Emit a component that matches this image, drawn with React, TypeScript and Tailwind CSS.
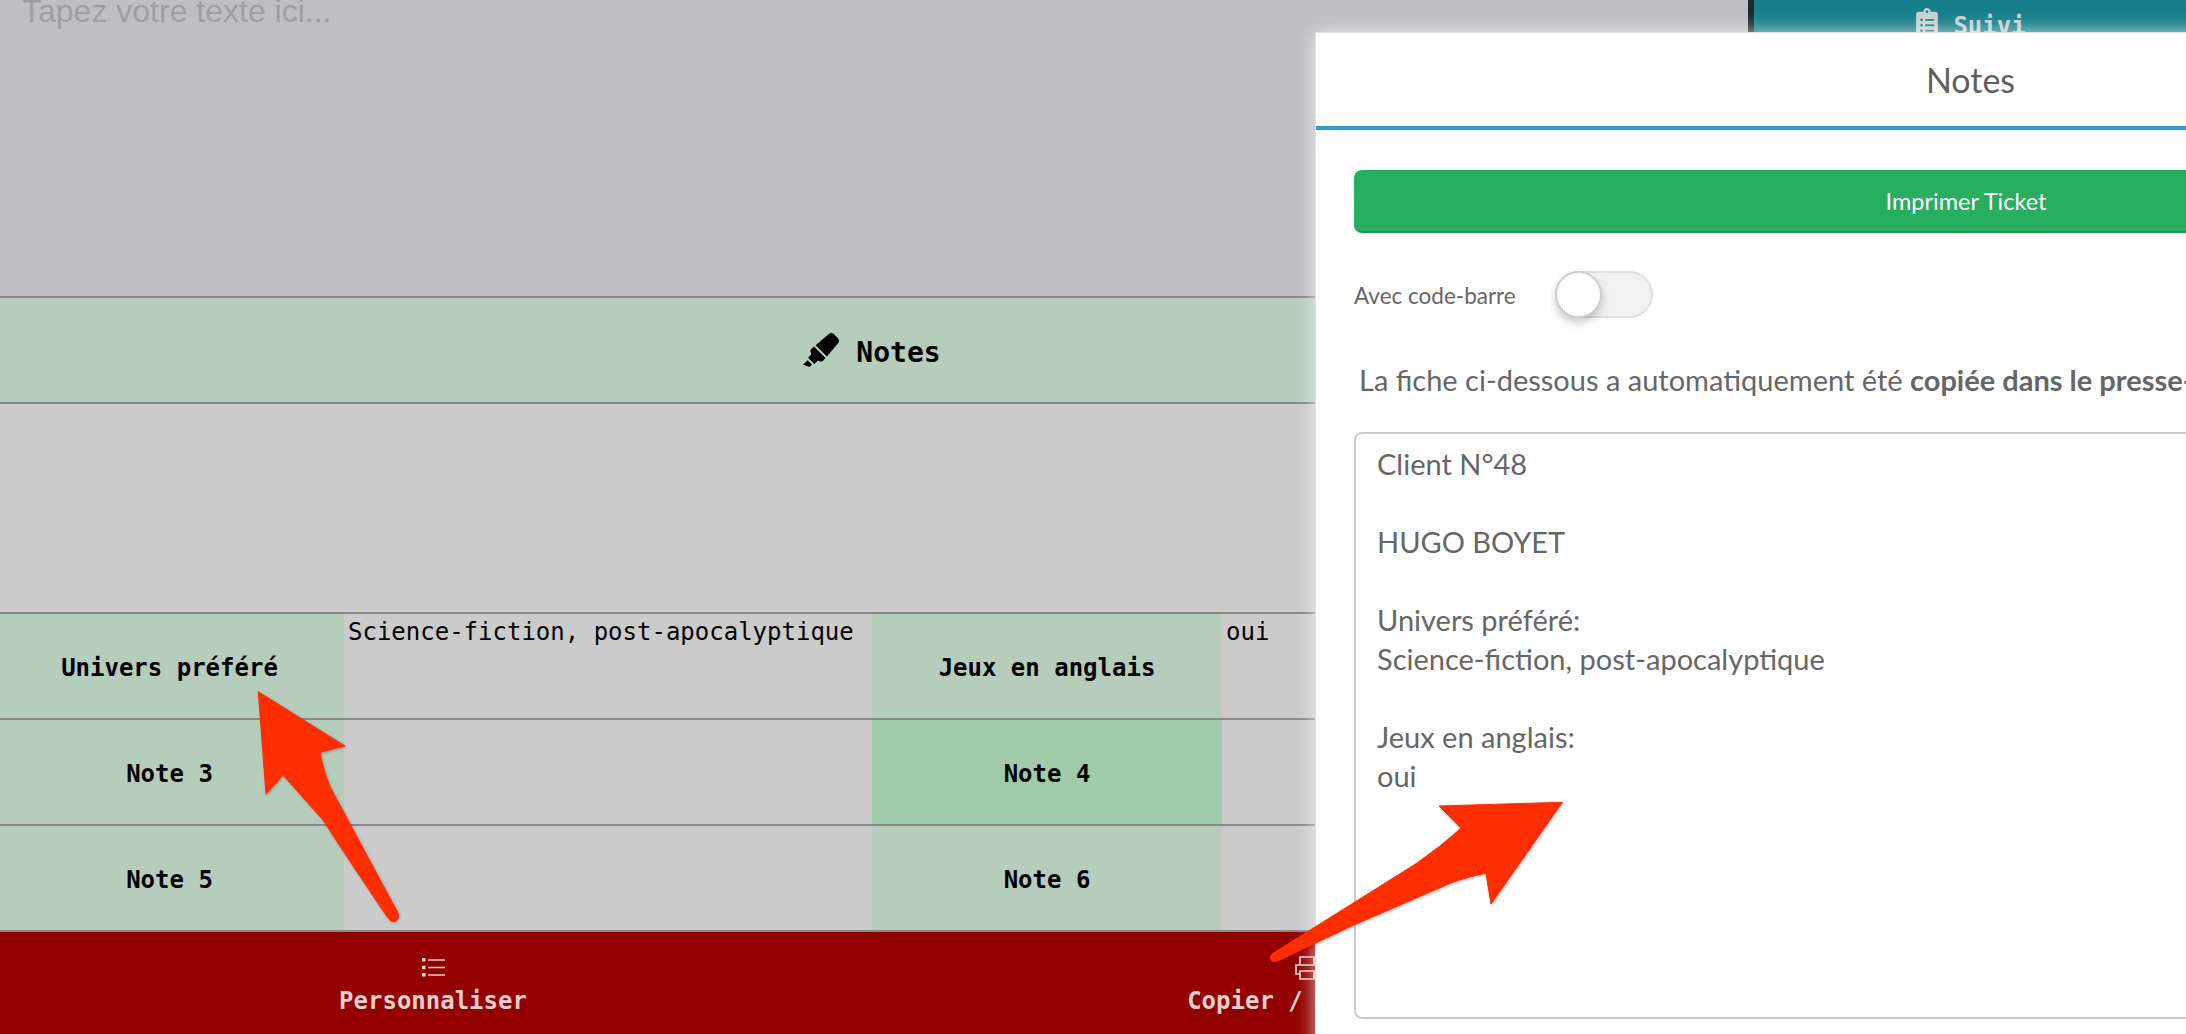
import React from 'react';
import { FaClipboardList, FaHighlighter } from 'react-icons/fa';

const mono = "font-['DejaVu_Sans_Mono',monospace]";

const LabelCell: React.FC<{ label: string; highlight?: boolean; first?: boolean }> = ({ label, highlight, first }) => (
  <div className={`flex items-center justify-center pt-1 text-[24px] font-bold text-black ${highlight ? 'bg-[#a0cba8]' : 'bg-[#b6cdbc]'} ${first ? 'pr-[5px]' : ''}`}>
    {label}
  </div>
);

const ValueCell: React.FC<{ value?: string }> = ({ value }) => (
  <div className="bg-[#cbcbcb] px-1 text-[24px] leading-[36px] text-black">{value}</div>
);

const rows = [
  ['Univers préféré', 'Science-fiction, post-apocalyptique', 'Jeux en anglais', 'oui'],
  ['Note 3', '', 'Note 4', ''],
  ['Note 5', '', 'Note 6', ''],
];

const NotesTable: React.FC = () => (
  <div className={mono}>
    {rows.map((row, i) => (
      <div key={row[0]} className="grid h-[106px] grid-cols-[344px_528px_350px_1fr] border-b-2 border-[#888888]">
        <LabelCell label={row[0]} first />
        <ValueCell value={row[1]} />
        <LabelCell label={row[2]} highlight={i === 1} />
        <ValueCell value={row[3]} />
      </div>
    ))}
  </div>
);

const ListIcon = () => (
  <svg width="23" height="19" viewBox="0 0 23 19" fill="none" stroke="currentColor" strokeWidth="1.6">
    <path d="M6 2h17M6 9.500h17M6 17h17" />
    <rect x="0" y="0" width="3.500" height="3.500" fill="currentColor" stroke="none" />
    <rect x="0" y="7.700" width="3.500" height="3.500" fill="currentColor" stroke="none" />
    <rect x="0" y="15" width="3.500" height="3.500" fill="currentColor" stroke="none" />
  </svg>
);

const PrintIcon = () => (
  <svg className="-ml-[6px]" width="24" height="24" viewBox="0 0 24 24" fill="none" stroke="currentColor" strokeWidth="1.7">
    <path d="M5 9V1h14v8M5 18H1v-9h22v9h-4M5 15h14v8H5z" />
  </svg>
);

const Arrows = () => (
  <svg className="pointer-events-none absolute inset-0 z-20" width="2186" height="1034" viewBox="0 0 2186 1034">
    <g fill="#ff2d00" stroke="#ff2d00" strokeWidth="1" strokeLinejoin="round" style={{ filter: 'drop-shadow(1px 1px 1.500px rgba(0,0,0,0.25))' }}>
      <path d="M258.300 691.700 L345 746 L320 752.300 Q322 766 330 786.700 L398 913 Q400 920 394 921.700 Q391 922 388 918 Q350 862 323 820 L283 775 L266 794.300 Z" />
      <path d="M1562.300 802.300 L1439 806 L1461 828.300 Q1440 847 1416.700 863.300 L1272 954 Q1268 958 1272 961 Q1275 962.500 1279 960.500 L1350 926.700 L1450 883.300 Q1470 876 1486 873.300 L1491 904 Z" />
    </g>
  </svg>
);

const NotesModal: React.FC = () => (
  <div className="absolute left-[1315px] top-[32px] z-10 h-[1100px] w-[1312px] border-l border-t border-[#dde3e3] bg-white font-['Lato',sans-serif] text-[#666666] shadow-[0_0_18px_rgba(255,255,255,0.7)]">
    <div className="flex h-[93px] items-center justify-center pr-[2px] text-[34px] text-[#5f5f5f]">Notes</div>
    <div className="h-[4px] bg-[#3498db]" />
    <div className="px-[38px] pt-[40px]">
      <button className="h-[63px] w-full rounded-lg border-b-2 border-[#219a52] bg-[#27ae60] pr-[11px] pt-[3px] text-[23.500px] text-white">
        Imprimer Ticket
      </button>
      <div className="mt-[37px] flex items-center gap-[36px]">
        <span className="w-[165px] whitespace-nowrap pt-[2px] text-[22.500px] leading-[47px]">Avec code-barre</span>
        <div className="flex h-[47px] w-[98px] rounded-full border-2 border-[#dfdfdf] bg-[#f1f1f1]">
          <div className="-m-[2px] h-[47px] w-[47px] rounded-full border-2 border-[#cfcfcf] bg-white shadow-[0_5px_9px_rgba(0,0,0,0.2)]" />
        </div>
      </div>
      <p className="mt-[41px] whitespace-nowrap pl-[5px] text-[29px] leading-[39px]">
        La fiche ci-dessous a automatiquement été <strong>copiée dans le presse-papier</strong>
      </p>
      <div className="mt-[33px] h-[587px] rounded-lg border-2 border-[#cccccc] px-[21px] pt-[10px] text-[29px] leading-[39px]">
        <p>Client N°48</p>
        <p className="mt-[39px]">HUGO BOYET</p>
        <p className="mt-[39px]">Univers préféré:</p>
        <p>Science-fiction, post-apocalyptique</p>
        <p className="mt-[39px]">Jeux en anglais:</p>
        <p>oui</p>
      </div>
    </div>
  </div>
);

const App: React.FC = () => {
  return (
    <div className="relative flex h-[1034px] w-[2186px] overflow-hidden bg-[#bfbec3]">
      <div className="flex h-full w-[1748px] shrink-0 flex-col">
        <div className="h-[298px] overflow-hidden border-b-2 border-[#888888] bg-[#bfbec3] pl-[22px] font-['Liberation_Sans',sans-serif] text-[32px] text-[#9e9ea2]">
          <div className="-mt-[8px] leading-[38px]">Tapez votre texte ici...</div>
        </div>
        <div className={`flex h-[106px] items-center justify-center gap-[17px] border-b-2 border-[#888888] bg-[#b6cdbc] pr-[4px] text-[28px] font-bold text-black ${mono}`}>
          <FaHighlighter className="h-[34px] w-[36px]" />
          <span className="mt-[6px]">Notes</span>
        </div>
        <div className="h-[210px] border-b-2 border-[#888888] bg-[#cbcbcb]" />
        <NotesTable />
        <div className={`grid flex-1 grid-cols-[866px_882px] bg-[#930000] text-[24px] font-bold text-[#e8d0d0] ${mono}`}>
          <div className="flex flex-col items-center pt-[26px]">
            <ListIcon />
            <span className="mt-[6px] leading-[36px]">Personnaliser</span>
          </div>
          <div className="flex flex-col items-center pl-[6px] pt-[24px]">
            <PrintIcon />
            <span className="mt-[3px] leading-[36px]">Copier / Imprimer</span>
          </div>
        </div>
      </div>
      <div className="flex flex-1 items-start justify-center gap-[15px] border-l-[6px] border-[#1d2a2b] bg-[#167f8a] pl-[2px] pt-[8px]">
        <FaClipboardList className="h-[29px] w-[22px] text-[#c8d0d0]" />
        <span className={`text-[24px] font-bold leading-[36px] text-[#c8d0d0] ${mono}`}>Suivi</span>
      </div>
      <NotesModal />
      <Arrows />
    </div>
  );
};

export default App;
